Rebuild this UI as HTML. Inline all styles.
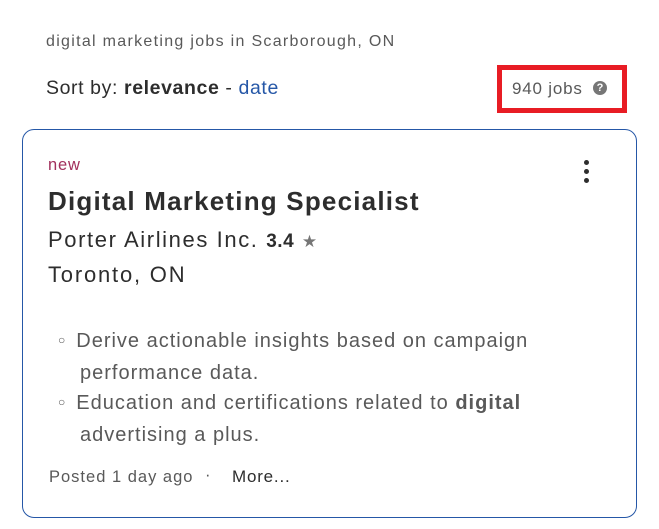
<!DOCTYPE html>
<html><head><style>
body{margin:0;width:659px;height:529px;background:#fff;font-family:"Liberation Sans",sans-serif;position:relative;overflow:hidden}
.a{position:absolute;white-space:nowrap}
</style></head><body>
<div class="a" style="left:46px;top:33px;font-size:16px;letter-spacing:1.3px;color:#595959">digital marketing jobs in Scarborough, ON</div>
<div class="a" style="left:46px;top:77px;font-size:19.5px;letter-spacing:0.6px;color:#2d2d2d">Sort by: <b>relevance</b> - <span style="color:#2557a7">date</span></div>
<div class="a" style="left:497px;top:65px;width:120px;height:38px;border:5px solid #e81c24"></div>
<div class="a" style="left:512px;top:79px;font-size:17px;letter-spacing:0.8px;color:#595959">940 jobs</div>
<div class="a" style="left:593px;top:81px;width:14px;height:14px;border-radius:50%;background:#767676;color:#fff;font-size:11px;font-weight:bold;text-align:center;line-height:14px">?</div>
<div class="a" style="left:22px;top:129px;width:613px;height:387px;border:1px solid #2557a7;border-radius:12px"></div>
<div class="a" style="left:48px;top:156px;font-size:16.5px;letter-spacing:0.8px;color:#a2305d">new</div>
<div class="a" style="left:48px;top:186px;font-size:26px;letter-spacing:1.2px;font-weight:bold;color:#2d2d2d">Digital Marketing Specialist</div>
<div class="a" style="left:48px;top:227px;font-size:22px;letter-spacing:1.6px;color:#2d2d2d">Porter Airlines Inc. <b style="font-size:19px;letter-spacing:0.5px">3.4</b> <span style="color:#767676;font-size:17px">★</span></div>
<div class="a" style="left:48px;top:262px;font-size:22px;letter-spacing:1.8px;color:#2d2d2d">Toronto, ON</div>
<div class="a" style="left:584px;top:160px;width:6px">
<div style="width:5px;height:5px;border-radius:50%;background:#2d2d2d;margin-bottom:4px"></div>
<div style="width:5px;height:5px;border-radius:50%;background:#2d2d2d;margin-bottom:4px"></div>
<div style="width:5px;height:5px;border-radius:50%;background:#2d2d2d"></div></div>
<div class="a" style="left:58px;top:326px;font-size:20px;line-height:30px;letter-spacing:1px;color:#595959">
<div><span style="font-size:12px;position:relative;top:-3px;margin-right:10px">○</span>Derive actionable insights based on campaign</div>
<div style="padding-left:22px">performance data.</div>
<div><span style="font-size:12px;position:relative;top:-3px;margin-right:10px">○</span>Education and certifications related to <b>digital</b></div>
<div style="padding-left:22px">advertising a plus.</div>
</div>
<div class="a" style="left:49px;top:468px;font-size:16.5px;letter-spacing:1px;color:#595959">Posted 1 day ago</div>
<div class="a" style="left:205px;top:466px;font-size:16.5px;color:#595959">·</div>
<div class="a" style="left:232px;top:467px;font-size:17px;letter-spacing:0.8px;color:#2d2d2d">More...</div>
</body></html>
